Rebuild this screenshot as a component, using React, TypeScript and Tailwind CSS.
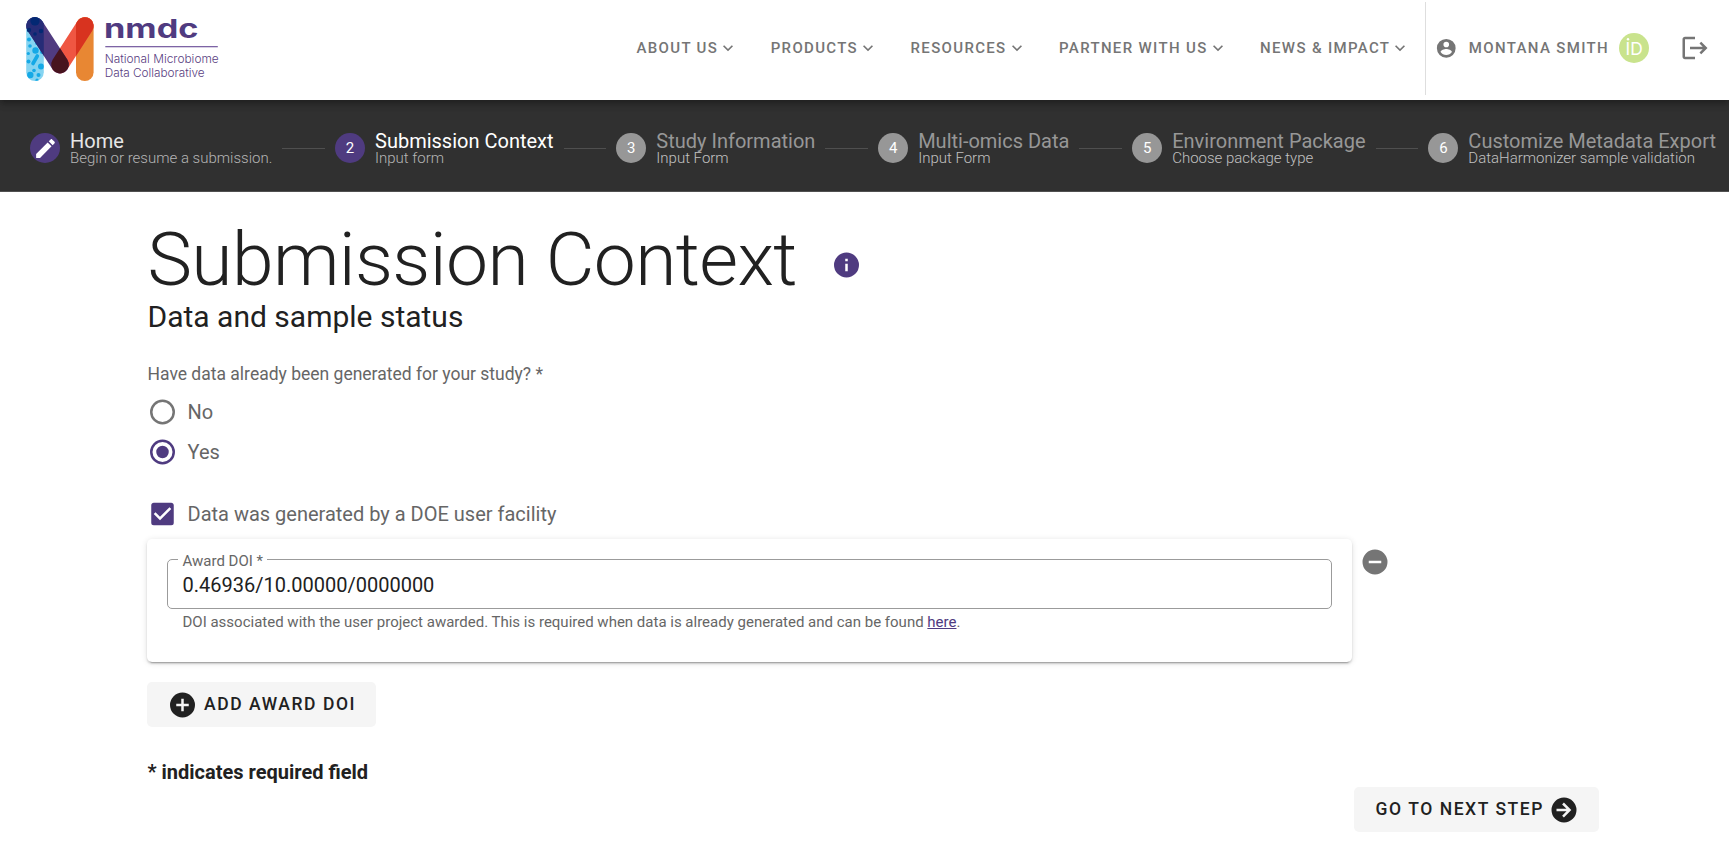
import React from "react";

const CIRCLE = "M12,2A10,10 0 0,0 2,12A10,10 0 0,0 12,22A10,10 0 0,0 22,12A10,10 0 0,0 12,2Z";
const ICONS = {
  chevron: "M7.41,8.58L12,13.17L16.59,8.58L18,10L12,16L6,10L7.41,8.58Z",
  account:
    "M12,19.2C9.5,19.2 7.29,17.92 6,16C6.03,14 10,12.9 12,12.9C14,12.9 17.97,14 18,16C16.71,17.92 14.5,19.2 12,19.2M12,5A3,3 0 0,1 15,8A3,3 0 0,1 12,11A3,3 0 0,1 9,8A3,3 0 0,1 12,5" +
    CIRCLE,
  logout:
    "M17 7L15.59 8.41L18.17 11H8V13H18.17L15.59 15.58L17 17L22 12M4 5H12V3H4C2.9 3 2 3.9 2 5V19C2 20.1 2.9 21 4 21H12V19H4V5Z",
  pencil:
    "M20.71,7.04C21.1,6.65 21.1,6 20.71,5.63L18.37,3.29C18,2.9 17.35,2.9 16.96,3.29L15.12,5.12L18.87,8.87M3,17.25V21H6.75L17.81,9.93L14.06,6.18L3,17.25Z",
  info: "M13,9H11V7H13M13,17H11V11H13" + CIRCLE,
  plus: "M17,13H13V17H11V13H7V11H11V7H13V11H17" + CIRCLE,
  minus: "M17,13H7V11H17" + CIRCLE,
  arrow:
    "M22,12A10,10 0 0,1 12,22A10,10 0 0,1 2,12A10,10 0 0,1 12,2A10,10 0 0,1 22,12M6,13H14L10.5,16.5L11.92,17.92L17.84,12L11.92,6.08L10.5,7.5L14,11H6V13Z",
  checkbox:
    "M10,17L5,12L6.41,10.58L10,14.17L17.59,6.58L19,8M19,3H5C3.89,3 3,3.89 3,5V19A2,2 0 0,0 5,21H19A2,2 0 0,0 21,19V5C21,3.89 20.1,3 19,3Z",
  radioOff:
    "M12,20A8,8 0 0,1 4,12A8,8 0 0,1 12,4A8,8 0 0,1 20,12A8,8 0 0,1 12,20" + CIRCLE,
  radioOn:
    "M12,20A8,8 0 0,1 4,12A8,8 0 0,1 12,4A8,8 0 0,1 20,12A8,8 0 0,1 12,20" +
    CIRCLE +
    "M12,7A5,5 0 0,0 7,12A5,5 0 0,0 12,17A5,5 0 0,0 17,12A5,5 0 0,0 12,7Z",
};

function Icon({
  name,
  className,
  viewBox = "0 0 24 24",
}: {
  name: keyof typeof ICONS;
  className: string;
  viewBox?: string;
}) {
  return (
    <svg viewBox={viewBox} className={`shrink-0 fill-current ${className}`} aria-hidden="true">
      <path d={ICONS[name]} />
    </svg>
  );
}

// Half a pixel to the right at 30px.
const NUDGED = "-0.4 0 24 24";

const BLOBS = [
  [30, 46, 1.8], [37, 43, 2], [29, 39.5, 2], [35.5, 50.5, 3.2], [28.3, 53.5, 1.6], [42, 52, 2],
  [28.5, 61.5, 2], [41, 66.5, 3], [34, 70.5, 1.8], [30.3, 75, 3.2], [38.5, 75, 2], [37, 80, 1.6],
];

function Logo() {
  return (
    <svg viewBox="0 0 230 100" className="h-[100px] w-[230px] shrink-0" role="img" aria-label="nmdc">
      <defs>
        <clipPath id="leftBar">
          <rect x="26.2" y="17" width="17.6" height="64" rx="8.8" />
        </clipPath>
        <clipPath id="leftSide">
          <rect x="20" y="10" width="23.8" height="80" />
        </clipPath>
        <clipPath id="rightSide">
          <rect x="76" y="10" width="24" height="80" />
        </clipPath>
        <mask id="leftStroke" maskUnits="userSpaceOnUse" x="0" y="0" width="110" height="100">
          <line x1="35" y1="26" x2="60" y2="64.6" stroke="#fff" strokeWidth="17.8" strokeLinecap="round" />
        </mask>
      </defs>
      <rect x="26.2" y="17" width="17.6" height="64" rx="8.8" fill="#85d4f1" />
      <g clipPath="url(#leftBar)" fill="#15a9e6">
        {BLOBS.map(([x, y, r], i) => (
          <circle key={i} cx={x} cy={y} r={r} />
        ))}
        <line x1="33" y1="63.5" x2="37.3" y2="56" stroke="#15a9e6" strokeWidth="3.6" strokeLinecap="round" />
      </g>
      <rect x="76" y="17" width="17.6" height="64" rx="8.8" fill="#e88733" />
      <g strokeWidth="17.6" strokeLinecap="round">
        <line x1="60" y1="64.6" x2="84.8" y2="26" stroke="#ef5642" />
        <line x1="60" y1="64.6" x2="84.8" y2="26" stroke="#d8331f" clipPath="url(#rightSide)" />
        <line x1="35" y1="26" x2="60" y2="64.6" stroke="#503b80" />
        <line x1="35" y1="26" x2="60" y2="64.6" stroke="#262c77" clipPath="url(#leftSide)" />
        <line x1="60" y1="64.6" x2="84.8" y2="26" stroke="#47141e" mask="url(#leftStroke)" />
      </g>
      <g clipPath="url(#leftBar)" fill="#032873">
        <circle cx="35" cy="21" r="4.6" />
        <circle cx="29" cy="30" r="2.2" />
        <circle cx="41" cy="31" r="2.2" />
        <circle cx="35" cy="34" r="1.8" />
      </g>
      <text x="104" y="37.7" fontSize="26" fontWeight="700" textLength="94.5" lengthAdjust="spacingAndGlyphs" className="fill-[#503b80] font-['Inter',sans-serif]">
        nmdc
      </text>
      <rect x="105.3" y="46" width="112.5" height="1.3" fill="#7d64a5" />
      <g className="fill-[#59407f] font-['Inter',sans-serif]" fontSize="12.2" fontWeight="300">
        <text x="104.7" y="63.3" textLength="114" lengthAdjust="spacingAndGlyphs">National Microbiome</text>
        <text x="104.7" y="77.3" textLength="100" lengthAdjust="spacingAndGlyphs">Data Collaborative</text>
      </g>
    </svg>
  );
}

const NAV = ["About Us", "Products", "Resources", "Partner with us", "News & Impact"];

function Header() {
  return (
    <header className="relative z-10 flex h-[100px] items-center bg-white shadow-[0_2px_5px_-1px_rgba(0,0,0,0.2),0_5px_6px_0_rgba(0,0,0,0.14),0_1px_12px_0_rgba(0,0,0,0.12)]">
      <Logo />
      <div className="flex flex-1 items-center self-stretch pt-[2px] pb-[6px] text-[15px] font-medium tracking-[0.0892857em] text-[#757575] uppercase">
        <nav className="ml-auto flex items-center gap-[32.5px] pr-[15px]">
          {NAV.map((item) => (
            <a key={item} className="flex items-center whitespace-nowrap">
              {item}
              <Icon name="chevron" className="size-[20px]" />
            </a>
          ))}
        </nav>
        <div className="-mb-px w-px self-stretch bg-[#dedede]" />
        <div className="flex items-center pr-[19px] pl-[9px]">
          <Icon name="account" className="size-[22.5px]" />
          <span className="ml-[11px] whitespace-nowrap">Montana Smith</span>
          <svg viewBox="0 0 30 30" className="ml-[10px] size-[30px]" aria-hidden="true">
            <circle cx="15" cy="15" r="15" fill="#c9e38d" />
            <circle cx="9" cy="6.3" r="1.2" fill="#fff" />
            <text x="6.6" y="22" fontSize="17.4" fontWeight="400" letterSpacing="0" className="fill-white font-['Inter',sans-serif]">
              ID
            </text>
          </svg>
          <Icon name="logout" className="ml-[31px] size-[30px]" />
        </div>
      </div>
    </header>
  );
}

const STEPS = [
  { title: "Home", sub: "Begin or resume a submission." },
  { title: "Submission Context", sub: "Input form" },
  { title: "Study Information", sub: "Input Form" },
  { title: "Multi-omics Data", sub: "Input Form" },
  { title: "Environment Package", sub: "Choose package type" },
  { title: "Customize Metadata Export", sub: "DataHarmonizer sample validation" },
];

function Stepper() {
  return (
    <div className="flex h-[92px] items-center gap-[10px] border-b border-[#505050] bg-[#303030] pt-[5px] pr-[13px] pl-[30px]">
      {STEPS.map((step, i) => (
        <React.Fragment key={step.title}>
          {i > 0 && <div className="h-px flex-1 bg-[#4f4f4f]" />}
          <div className="flex items-center gap-[10px]">
            <span
              className={`flex size-[30px] items-center justify-center rounded-full text-[15px] text-white ${
                i < 2 ? "bg-[#4f3b80]" : "bg-[#979797]"
              }`}
            >
              {i === 0 ? <Icon name="pencil" className="size-[25px]" /> : i + 1}
            </span>
            <span className="flex flex-col whitespace-nowrap">
              <span
                className={`text-[20px] leading-[20px] ${
                  i === 0 ? "text-[#e6e6e6]" : i === 1 ? "text-white" : "text-[#979797]"
                }`}
              >
                {step.title}
              </span>
              <span className={`text-[15px] leading-[14px] font-light ${i < 2 ? "text-[#b5b5b5]" : "text-[#c1c1c1]"}`}>
                {step.sub}
              </span>
            </span>
          </div>
        </React.Fragment>
      ))}
    </div>
  );
}

const BUTTON =
  "flex h-[45px] items-center rounded-[5px] bg-[#f5f5f5] text-[17.5px] font-medium tracking-[0.0892857em] uppercase";

export default function App() {
  return (
    <div className="h-[852px] w-full overflow-hidden bg-white font-['Roboto',sans-serif] text-[#212121]">
      <Header />
      <Stepper />
      <main className="flex flex-col pt-[30px] pr-[130px] pl-[147px]">
        <div className="flex h-[75px] items-center">
          <h1 className="pl-[0.5px] text-[75px] leading-[75px] font-light tracking-[-0.0083333em]">Submission Context</h1>
          <Icon name="info" viewBox={NUDGED} className="mt-[11px] ml-[34.5px] size-[30px] text-[#4f3b80]" />
        </div>
        <h2 className="pl-[0.5px] text-[30px] leading-[40px]">Data and sample status</h2>

        <p className="mt-[25px] pl-[0.5px] text-[17.5px] leading-[25px] text-[#666]">
          Have data already been generated for your study? *
        </p>
        <div className="mt-[10px] flex flex-col gap-[10px] text-[20px] leading-[30px] text-[#666]">
          <label className="flex gap-[10.5px]">
            <Icon name="radioOff" viewBox={NUDGED} className="size-[30px] text-[#757575]" />
            No
          </label>
          <label className="flex gap-[10.5px]">
            <Icon name="radioOn" viewBox={NUDGED} className="size-[30px] text-[#4f3b80]" />
            Yes
          </label>
          <label className="mt-[22px] flex gap-[10.5px]">
            <Icon name="checkbox" viewBox={NUDGED} className="size-[30px] text-[#4f3b80]" />
            Data was generated by a DOE user facility
          </label>
        </div>

        <div className="mt-[10px] flex">
          <section className="h-[123px] w-[1205px] rounded-[5px] px-[20px] pt-[20px] shadow-[0_4px_1px_-3px_rgba(0,0,0,0.2),0_2px_2px_0_rgba(0,0,0,0.14),0_1px_6px_0_rgba(0,0,0,0.12)]">
            <div className="relative flex h-[50px] items-center rounded-[5px] border border-[#9b9b9b] px-[14.5px] pt-[1px] text-[20px]">
              <span className="absolute -top-[9px] left-[10px] bg-white pr-[4px] pl-[4.5px] text-[15px] leading-[20px] text-[#666]">
                Award DOI *
              </span>
              0.46936/10.00000/0000000
            </div>
            <p className="pt-[2px] pl-[15.5px] text-[15px] leading-[22px] text-[#666]">
              DOI associated with the user project awarded. This is required when data is already generated and can be
              found <a className="text-[#4f3b80] underline">here</a>.
            </p>
          </section>
          <Icon name="minus" className="mt-[8px] ml-[8px] size-[30px] text-[#757575]" />
        </div>

        <div className="mt-[20px] flex">
          <button className={`${BUTTON} px-[20px]`}>
            <Icon name="plus" viewBox={NUDGED} className="mr-[7px] size-[30px]" />
            Add Award DOI
          </button>
        </div>

        <p className="mt-[30px] pl-[0.5px] text-[20px] leading-[30px] font-bold">* indicates required field</p>
        <div className="flex justify-end">
          <button className={`${BUTTON} pr-[20px] pl-[21.5px]`}>
            Go to next step
            <Icon name="arrow" className="ml-[5px] size-[30px]" />
          </button>
        </div>
      </main>
    </div>
  );
}
